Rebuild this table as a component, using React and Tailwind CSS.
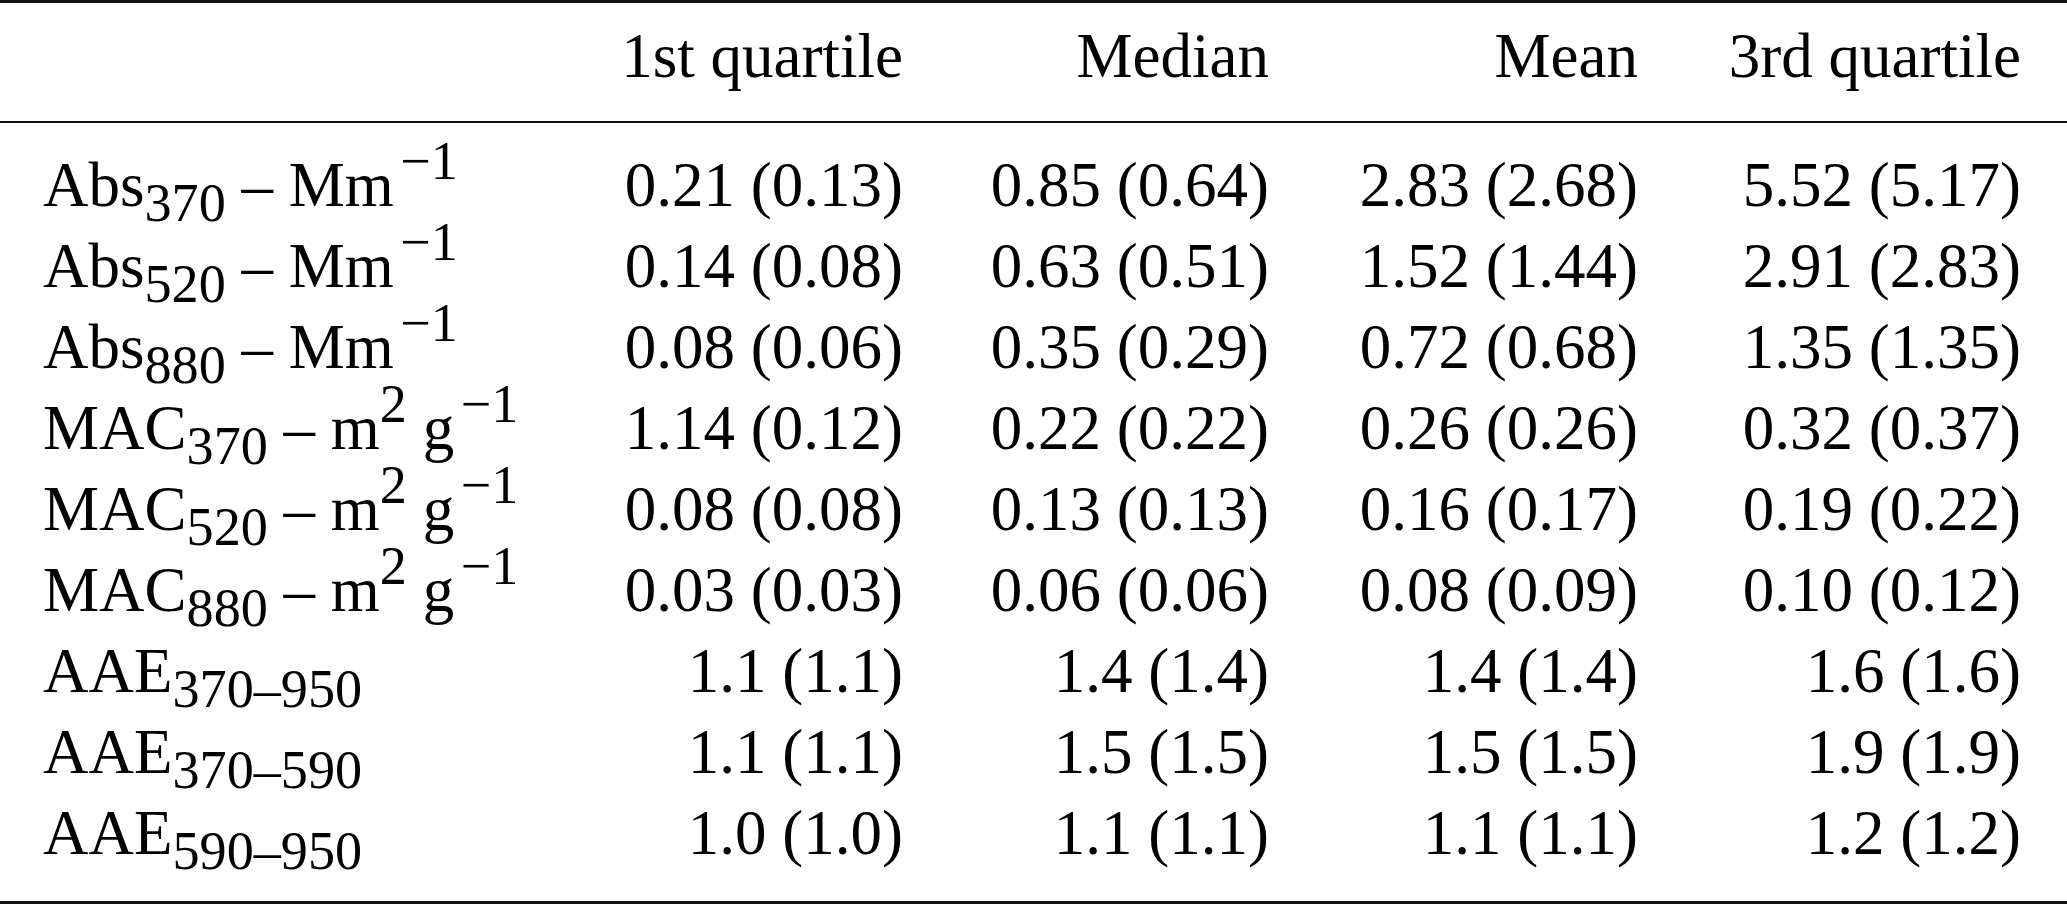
import React from "react";

const Sub = ({ children }) => (
  <span className="text-[0.86em] align-[-0.27em] leading-[0]">{children}</span>
);
const Sup = ({ children, gap }) => (
  <span className={`text-[0.86em] align-[0.5em] leading-[0] ${gap ? "ml-[0.12em]" : ""}`}>{children}</span>
);

const rows = [
  { label: <>Abs<Sub>370</Sub> – Mm<Sup gap>−1</Sup></>, v: ["0.21 (0.13)", "0.85 (0.64)", "2.83 (2.68)", "5.52 (5.17)"] },
  { label: <>Abs<Sub>520</Sub> – Mm<Sup gap>−1</Sup></>, v: ["0.14 (0.08)", "0.63 (0.51)", "1.52 (1.44)", "2.91 (2.83)"] },
  { label: <>Abs<Sub>880</Sub> – Mm<Sup gap>−1</Sup></>, v: ["0.08 (0.06)", "0.35 (0.29)", "0.72 (0.68)", "1.35 (1.35)"] },
  { label: <>MAC<Sub>370</Sub> – m<Sup>2</Sup> g<Sup gap>−1</Sup></>, v: ["1.14 (0.12)", "0.22 (0.22)", "0.26 (0.26)", "0.32 (0.37)"] },
  { label: <>MAC<Sub>520</Sub> – m<Sup>2</Sup> g<Sup gap>−1</Sup></>, v: ["0.08 (0.08)", "0.13 (0.13)", "0.16 (0.17)", "0.19 (0.22)"] },
  { label: <>MAC<Sub>880</Sub> – m<Sup>2</Sup> g<Sup gap>−1</Sup></>, v: ["0.03 (0.03)", "0.06 (0.06)", "0.08 (0.09)", "0.10 (0.12)"] },
  { label: <>AAE<Sub>370–950</Sub></>, v: ["1.1 (1.1)", "1.4 (1.4)", "1.4 (1.4)", "1.6 (1.6)"] },
  { label: <>AAE<Sub>370–590</Sub></>, v: ["1.1 (1.1)", "1.5 (1.5)", "1.5 (1.5)", "1.9 (1.9)"] },
  { label: <>AAE<Sub>590–950</Sub></>, v: ["1.0 (1.0)", "1.1 (1.1)", "1.1 (1.1)", "1.2 (1.2)"] },
];

const cols = "grid grid-cols-[517px_343px_366px_369px_383px] pl-[43px] pr-[46px]";

export default function App() {
  return (
    <div
      className="w-[2067px] h-[904px] bg-white text-black flex flex-col border-t-[3px] border-b-[3px] border-[#111]"
      style={{ fontFamily: '"Liberation Serif", "Times New Roman", serif' }}
    >
      <div className={`${cols} h-[120px] pt-[13px] text-[63px] leading-[81px] border-b-[2px] border-[#111]`}>
        <div />
        <div className="text-right whitespace-nowrap">1st quartile</div>
        <div className="text-right whitespace-nowrap">Median</div>
        <div className="text-right whitespace-nowrap">Mean</div>
        <div className="text-right whitespace-nowrap">3rd quartile</div>
      </div>
      <div className="pt-[22px] flex flex-col text-[63px] leading-[81px]">
        {rows.map((r, i) => (
          <div key={i} className={`${cols} h-[81px]`}>
            <div className="whitespace-nowrap">{r.label}</div>
            {r.v.map((v, j) => (
              <div key={j} className="text-right whitespace-nowrap">{v}</div>
            ))}
          </div>
        ))}
      </div>
    </div>
  );
}
